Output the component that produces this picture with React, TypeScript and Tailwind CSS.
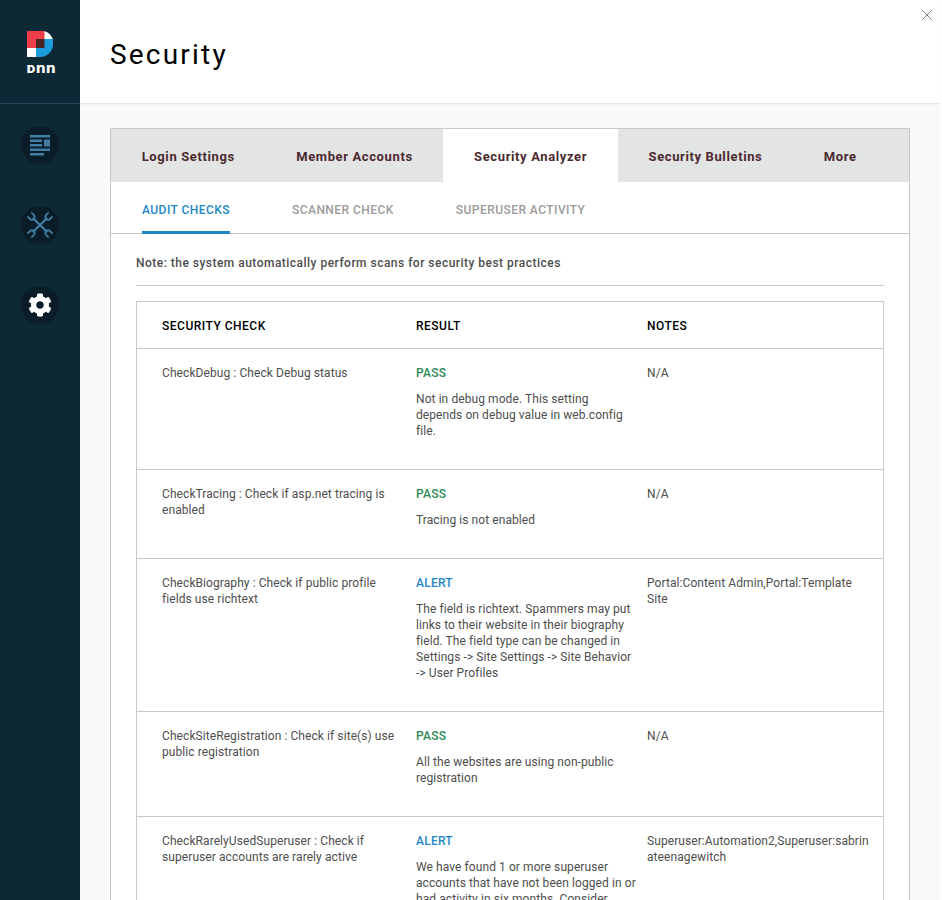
import React from "react";
import { FaCog } from "react-icons/fa";

const tabs = ["Login Settings", "Member Accounts", "Security Analyzer", "Security Bulletins", "More"];
const subTabs = ["AUDIT CHECKS", "SCANNER CHECK", "SUPERUSER ACTIVITY"];

const rows = [
  {
    check: "CheckDebug : Check Debug status",
    result: "PASS",
    text: "Not in debug mode. This setting depends on debug value in web.config file.",
    notes: "N/A",
  },
  {
    check: "CheckTracing : Check if asp.net tracing is enabled",
    result: "PASS",
    text: "Tracing is not enabled",
    notes: "N/A",
  },
  {
    check: "CheckBiography : Check if public profile fields use richtext",
    result: "ALERT",
    text: "The field is richtext. Spammers may put links to their website in their biography field. The field type can be changed in Settings -> Site Settings -> Site Behavior -> User Profiles",
    notes: "Portal:Content Admin,Portal:Template Site",
  },
  {
    check: "CheckSiteRegistration : Check if site(s) use public registration",
    result: "PASS",
    text: "All the websites are using non-public registration",
    notes: "N/A",
  },
  {
    check: "CheckRarelyUsedSuperuser : Check if superuser accounts are rarely active",
    result: "ALERT",
    text: "We have found 1 or more superuser accounts that have not been logged in or had activity in six months. Consider removing these accounts.",
    notes: "Superuser:Automation2,Superuser:sabrinateenagewitch",
  },
];

const Logo = () => (
  <svg width="26" height="26" viewBox="0 0 26 26">
    <path d="M17 0a13 13 0 0 1 9 9H17z" fill="#fff" />
    <rect x="0" y="0" width="17.5" height="17" fill="#ef3e4a" />
    <path d="M9 8h17v5c0 7-5.500 13-13 13H9z" fill="#1b9ddb" />
    <rect x="0" y="17" width="9" height="9" fill="#fff" />
    <rect x="9" y="8" width="8.500" height="9" fill="#4a2528" />
  </svg>
);

const ContentIcon = () => (
  <svg width="22" height="22" viewBox="0 0 22 22" fill="#3f7fa3">
    <rect x="1" y="1" width="20" height="2.500" />
    <rect x="1" y="5.500" width="12" height="2.500" />
    <rect x="1" y="10" width="12" height="2.500" />
    <rect x="15" y="5.500" width="6" height="7" />
    <rect x="1" y="14.500" width="20" height="2.500" />
    <rect x="1" y="19" width="14" height="2.500" />
  </svg>
);

const Wrench = ({ angle }: { angle: number }) => (
  <g transform={`rotate(${angle} 12 12)`}>
    <path d="M12 2V22" strokeWidth="2.2" />
    <path d="M9.300 -3V0.500a2.700 2.700 0 0 0 5.400 0V-3" strokeWidth="1.700" />
    <path d="M9.300 27V23.500a2.700 2.700 0 0 1 5.400 0V27" strokeWidth="1.700" />
  </g>
);

const ToolsIcon = () => (
  <svg width="24" height="24" viewBox="0 0 24 24" fill="none" stroke="#3f7fa3" className="overflow-visible">
    <Wrench angle={45} />
    <Wrench angle={-45} />
  </svg>
);

const Sidebar = () => (
  <aside className="w-20 shrink-0 bg-[#0e2936] flex flex-col">
    <div className="h-[104px] border-b border-[#24495e] flex flex-col items-center pt-[31px]">
      <Logo />
      <span className="mt-[3px] ml-[2px] text-[14px] leading-[16px] font-bold text-white font-['DejaVu_Sans',sans-serif]">
        ᴅnn
      </span>
    </div>
    <div className="flex flex-col items-center gap-[42px] pt-[22px]">
      <div className="w-[38px] h-[38px] rounded-full bg-[#0a1c27] flex items-center justify-center">
        <ContentIcon />
      </div>
      <div className="w-[38px] h-[38px] rounded-full bg-[#0a1c27] flex items-center justify-center">
        <ToolsIcon />
      </div>
      <div className="w-[38px] h-[38px] rounded-full bg-[#0a1c27] flex items-center justify-center">
        <FaCog className="text-white" size={24} />
      </div>
    </div>
  </aside>
);

export default function App() {
  return (
    <div className="h-screen overflow-hidden flex bg-white font-['Roboto',sans-serif]">
      <Sidebar />
      <main className="w-[860px] shrink-0 bg-[#f9f9f9] relative">
        <button className="absolute top-[10px] right-[8px] w-[10px] h-[10px]">
          <svg width="10" height="10" viewBox="0 0 10 10" stroke="#777" strokeWidth="0.9">
            <path d="M0 0 10 10M10 0 0 10" />
          </svg>
        </button>
        <header className="h-[104px] bg-white border-b border-[#e8e8e8] shadow-[0_1px_2px_rgba(0,0,0,0.04)] pl-[30px] pt-[37px]">
          <h1 className="text-[28px] leading-[36px] tracking-[2.2px] text-black">Security</h1>
        </header>

        <div className="mt-6 mx-[30px] border border-[#c8c8c8] bg-white">
          <div className="flex bg-[#e3e4e4] h-[53px]">
            {tabs.map((t) => (
              <div
                key={t}
                className={`h-full flex items-center justify-center px-[30.7px] pt-[3px] text-[13px] font-bold tracking-[0.62px] text-[#4b2a2f] ${
                  t === "Security Analyzer" ? "bg-white" : ""
                }`}
              >
                {t}
              </div>
            ))}
          </div>

          <div className="flex gap-[62px] px-[31px] h-[52px] border-b border-[#c8c8c8]">
            {subTabs.map((t, i) => (
              <div
                key={t}
                className={`h-[52px] flex items-center pt-[7px] text-[12px] font-medium tracking-[0.45px] border-b-[3px] ${
                  i === 0 ? "text-[#1e88c7] border-[#1e88c7]" : "text-[#9b9b9b] border-transparent"
                }`}
              >
                {t}
              </div>
            ))}
          </div>

          <div className="px-[25px] pt-[20px]">
            <p className="text-[12px] leading-[18px] font-medium tracking-[0.48px] text-[#4e4e4e] pb-[13px] border-b border-[#c8c8c8]">
              Note: the system automatically perform scans for security best practices
            </p>

            <div className="mt-[15px] border border-[#c8c8c8]">
              <div className="grid grid-cols-[254px_231px_1fr] h-[46px] items-center pl-[25px] pt-[2px] text-[12px] font-medium tracking-[0.5px] text-black">
                <div>SECURITY CHECK</div>
                <div>RESULT</div>
                <div>NOTES</div>
              </div>
              {rows.map((r) => (
                <div
                  key={r.check}
                  className="grid grid-cols-[254px_231px_1fr] border-t border-[#c8c8c8] pl-[25px] pt-[16px] pb-[30px] text-[12px] leading-[16px] tracking-[0.08px] text-[#4e4e4e]"
                >
                  <div className="pr-[16px]">{r.check}</div>
                  <div className="pr-[10px]">
                    <div
                      className={`mb-[10px] font-medium tracking-[0.25px] ${
                        r.result === "PASS" ? "text-[#2e8b57]" : "text-[#1e88c7]"
                      }`}
                    >
                      {r.result}
                    </div>
                    <div>{r.text}</div>
                  </div>
                  <div className="min-w-0 pr-[12px] break-words">{r.notes}</div>
                </div>
              ))}
            </div>
          </div>
        </div>
      </main>
    </div>
  );
}
